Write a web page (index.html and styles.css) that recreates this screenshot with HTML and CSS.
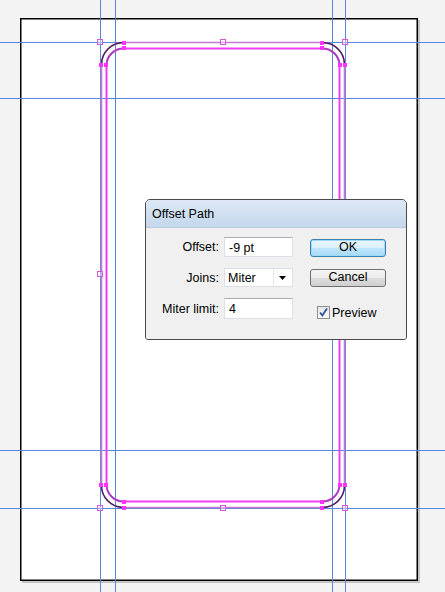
FILE: index.html
```html
<!DOCTYPE html>
<html>
<head>
<meta charset="utf-8">
<title>Offset Path</title>
<link rel="stylesheet" href="styles.css">
</head>
<body>
<div class="workspace">
  <svg class="canvas" width="445" height="592" viewBox="0 0 445 592">
    <!-- artboard -->
    <rect x="22" y="20" width="398" height="563" fill="#c4c4c4"/>
    <rect x="20.75" y="18.75" width="396.5" height="561.5" fill="#fff" stroke="#000" stroke-width="1.5"/>
    <!-- guides -->
    <g stroke="#5689dc" stroke-width="1">
      <line x1="100.5" y1="0" x2="100.5" y2="592"/>
      <line x1="115.5" y1="0" x2="115.5" y2="592"/>
      <line x1="332.5" y1="0" x2="332.5" y2="592"/>
      <line x1="345.5" y1="0" x2="345.5" y2="592"/>
      <line x1="0" y1="42.5" x2="445" y2="42.5"/>
      <line x1="0" y1="98.5" x2="445" y2="98.5"/>
      <line x1="0" y1="450.5" x2="445" y2="450.5"/>
      <line x1="0" y1="508.5" x2="445" y2="508.5"/>
    </g>
    <!-- original path -->
    <rect x="101.5" y="42.5" width="243" height="465" rx="22" fill="none" stroke="#c27ad0" stroke-width="1.6"/>
    <g fill="none" stroke="#4a1a56" stroke-width="1.3">
      <path d="M101.5,64.5 A22,22 0 0 1 123.5,42.5"/>
      <path d="M322.5,42.5 A22,22 0 0 1 344.5,64.5"/>
      <path d="M101.5,485.5 A22,22 0 0 0 123.5,507.5"/>
      <path d="M322.5,507.5 A22,22 0 0 0 344.5,485.5"/>
    </g>
    <!-- offset path -->
    <rect x="106.5" y="48.5" width="233" height="453" rx="17" fill="none" stroke="#f23cf2" stroke-width="2"/>
    <g fill="none" stroke="#9a45b0" stroke-width="1.4">
      <path d="M106.5,64.5 A17,17 0 0 1 123.5,48.5"/>
      <path d="M322.5,48.5 A17,17 0 0 1 339.5,64.5"/>
      <path d="M106.5,485.5 A17,17 0 0 0 123.5,501.5"/>
      <path d="M322.5,501.5 A17,17 0 0 0 339.5,485.5"/>
    </g>
    <!-- anchor points -->
    <g fill="#ff33ff">
      <rect x="122" y="41" width="4" height="4"/>
      <rect x="320" y="41" width="4" height="4"/>
      <rect x="99" y="63" width="4" height="4"/>
      <rect x="343" y="63" width="4" height="4"/>
      <rect x="99" y="483" width="4" height="4"/>
      <rect x="343" y="483" width="4" height="4"/>
      <rect x="122" y="506" width="4" height="4"/>
      <rect x="320" y="506" width="4" height="4"/>
      <rect x="122" y="46" width="4" height="4"/>
      <rect x="320" y="46" width="4" height="4"/>
      <rect x="104" y="63" width="4" height="4"/>
      <rect x="338" y="63" width="4" height="4"/>
      <rect x="104" y="483" width="4" height="4"/>
      <rect x="338" y="483" width="4" height="4"/>
      <rect x="122" y="500" width="4" height="4"/>
      <rect x="320" y="500" width="4" height="4"/>
    </g>
    <!-- bounding box handles -->
    <g fill="#fff" fill-opacity="0.4" stroke="#d05ad8" stroke-width="1">
      <rect x="97.5" y="39.5" width="5" height="5"/>
      <rect x="342.5" y="39.5" width="5" height="5"/>
      <rect x="97.5" y="505.5" width="5" height="5"/>
      <rect x="342.5" y="505.5" width="5" height="5"/>
      <rect x="220.5" y="39.5" width="5" height="5"/>
      <rect x="220.5" y="505.5" width="5" height="5"/>
      <rect x="97.5" y="271.5" width="5" height="5"/>
      <rect x="342.5" y="271.5" width="5" height="5"/>
    </g>
  </svg>

  <div class="dialog">
    <div class="titlebar">Offset Path</div>
    <div class="dialog-body">
      <div class="fields">
        <label class="field-label">Offset:</label>
        <div class="textbox">-9 pt</div>
        <label class="field-label">Joins:</label>
        <div class="select">
          <span class="select-value">Miter</span>
          <span class="select-arrow"><svg width="8" height="4" viewBox="0 0 8 4"><path d="M0,0 H7 L3.5,4 Z" fill="#000"/></svg></span>
        </div>
        <label class="field-label">Miter limit:</label>
        <div class="textbox">4</div>
      </div>
      <div class="actions">
        <div class="button button-default">OK</div>
        <div class="button">Cancel</div>
        <div class="check-row">
          <span class="checkbox"><svg width="11" height="11" viewBox="0 0 11 11"><path d="M2,5.5 L4.3,8.5 L9,1.5" fill="none" stroke="#2f4f9f" stroke-width="1.8"/></svg></span>
          <span class="check-label">Preview</span>
        </div>
      </div>
    </div>
  </div>
</div>
</body>
</html>
```

FILE: styles.css
```css
html, body {
  margin: 0;
  padding: 0;
  background: #f3f3f3;
  overflow: hidden;
}

.workspace {
  position: relative;
  width: 445px;
  height: 592px;
  font-family: "Liberation Sans", Arial, sans-serif;
  font-size: 12px;
  color: #000;
}

.canvas {
  display: block;
}

.dialog {
  position: absolute;
  left: 145px;
  top: 199px;
  width: 260px;
  height: 139px;
  border: 1px solid #4a4a4a;
  border-radius: 5px 5px 3px 3px;
  background: #f0f0f0;
  display: flex;
  flex-direction: column;
  overflow: hidden;
}

.titlebar {
  height: 28px;
  box-sizing: border-box;
  padding: 7px 0 0 6px;
  background: linear-gradient(#dde8f5, #c4d7ed);
  border-bottom: 1px solid #b9c9dc;
  font-size: 12.5px;
  line-height: 14px;
}

.dialog-body {
  flex: 1;
  display: flex;
  padding-top: 9px;
  background: #f0f0f0;
}

.fields {
  display: grid;
  grid-template-columns: 73px 69px;
  grid-template-rows: 20px 19px 21px;
  row-gap: 11px;
  column-gap: 5px;
  align-items: center;
}

.field-label {
  text-align: right;
  line-height: 14px;
  font-size: 12.5px;
}

.textbox {
  box-sizing: border-box;
  height: 100%;
  background: #fff;
  border: 1px solid #dbdfe6;
  border-top-color: #abadb3;
  padding: 3px 0 0 4px;
  line-height: 14px;
  font-size: 12.5px;
}

.select {
  box-sizing: border-box;
  height: 100%;
  background: #fff;
  border: 1px solid #dbdfe6;
  display: flex;
  font-size: 12.5px;
}

.select-value {
  flex: 1;
  border-right: 1px solid #e6e6e6;
  padding: 2px 0 0 3px;
  line-height: 14px;
}

.select-arrow {
  width: 18px;
  display: flex;
  align-items: center;
  justify-content: center;
  padding-top: 1px;
}

.actions {
  margin-left: 17px;
  padding-top: 2px;
  display: flex;
  flex-direction: column;
  width: 76px;
}

.button {
  box-sizing: border-box;
  height: 18px;
  border: 1px solid #707070;
  border-radius: 3px;
  background: linear-gradient(#f4f4f4 0%, #ebebeb 50%, #dddddd 51%, #cfcfcf 100%);
  text-align: center;
  line-height: 15px;
  font-size: 12.5px;
  margin-bottom: 12px;
}

.button-default {
  border-color: #3c7fb1;
  background: linear-gradient(#eaf6fd 0%, #d9f0fc 50%, #bee6fd 51%, #a7d9f5 100%);
  box-shadow: inset 0 0 0 1px #9fd9f6;
}

.check-row {
  display: flex;
  align-items: center;
  margin-top: 6px;
  padding-left: 7px;
}

.checkbox {
  box-sizing: border-box;
  width: 13px;
  height: 13px;
  border: 1px solid #8e8f8f;
  background: linear-gradient(#e6e6e6, #fbfbfb);
  display: flex;
  align-items: center;
  justify-content: center;
}

.check-label {
  margin-left: 2px;
  line-height: 14px;
  padding-top: 1px;
  font-size: 12.5px;
}
```
